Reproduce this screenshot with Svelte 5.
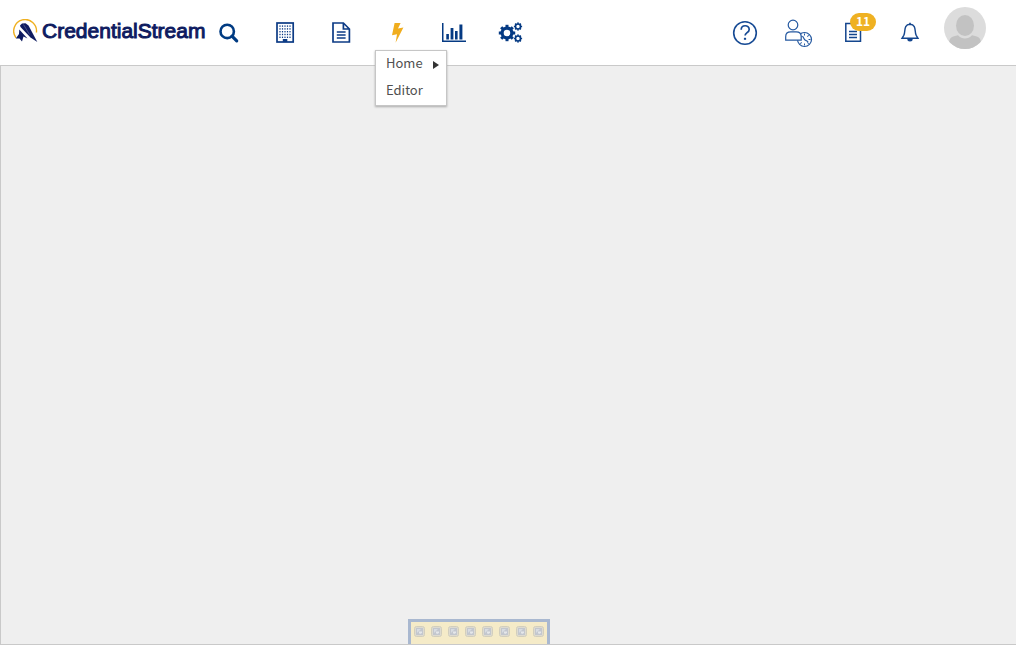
<script>
  const menu = [
    { label: 'Home', sub: true },
    { label: 'Editor', sub: false }
  ];
  const dots = [];
  for (let r = 0; r < 5; r++) for (let c = 0; c < 5; c++) dots.push([10.4 + c * 2.5, 8.4 + r * 2.8]);
  const slots = Array.from({ length: 8 }, (_, i) => i + 1);
  const teeth = [0, 45, 90, 135, 180, 225, 270, 315];
  const ticks = [0, 45, 90, 135, 180, 225, 270, 315];
  const gears = [
    { x: 14, y: 16, s: 1, r: 4.9, w: 3.2 },
    { x: 25, y: 9.5, s: 0.5, r: 5, w: 3.2 },
    { x: 25, y: 21.5, s: 0.5, r: 5, w: 3.2 }
  ];
</script>

<div class="page">
  <header>
    <a class="logo" href="#home" aria-label="CredentialStream">
      <svg width="25" height="25" viewBox="0 0 25 25">
        <path d="M3 18.800A11.400 11.400 0 1 1 23.400 13.500" fill="none" stroke="#efb021" stroke-width="1.4" />
        <path d="M7 6.500 9 4.500 12.500 4.200 15.500 6.500 24.300 23 17.500 18.500 7.500 8Z" fill="#0e1b60" />
        <path d="M6.300 10.500 14.500 19.500 10.500 17.500 9 22.500 6.500 19.500 2.800 19.500 6 15Z" fill="#0e1b60" />
        <path d="m10.500 5.500 6 10" stroke="#7d85aa" stroke-width=".5" />
      </svg>
      <span>CredentialStream</span>
    </a>
    <nav>
      <button aria-label="Search">
        <svg viewBox="0 0 32 32"><circle cx="14.2" cy="14.4" r="6.7" fill="none" stroke="#003b82" stroke-width="2.6" /><path d="m19 19.200 4.700 4.700" stroke="#003b82" stroke-width="3.2" stroke-linecap="round" /></svg>
      </button>
      <button aria-label="Facilities">
        <svg viewBox="0 0 32 32">
          <rect x="8" y="6" width="16.200" height="19" fill="none" stroke="#0c3b85" stroke-width="1.7" />
          {#each dots as [x, y]}<rect x={x} y={y} width="1.2" height="1.4" fill="#0c3b85" />{/each}
          <path d="M13.800 25v-3h4.500v3" fill="#0c3b85" />
        </svg>
      </button>
      <button aria-label="Documents">
        <svg viewBox="0 0 32 32" fill="none" stroke="#0c3b85" stroke-width="1.7"><path d="M8 6h10.400l6 6V25H8ZM18.400 6v6h6" /><path d="M11.800 15h8.800M11.800 18h8.800M11.800 21h8.800" stroke-width="1.5" /></svg>
      </button>
      <div class="drop">
        <button aria-label="Actions" aria-expanded="true">
          <svg viewBox="0 0 32 32"><path d="M13.600 6h6l-2.600 5.500 5.400-.9L14.600 25.700l1.400-8.500-5 1Z" fill="#f0ad1e" /></svg>
        </button>
        <ul>
          {#each menu as item}
            <li><a href="#{item.label}">{item.label}{#if item.sub}<svg class="arrow" viewBox="0 0 6 8"><path d="M0 0v8l6-4Z" fill="#333" /></svg>{/if}</a></li>
          {/each}
        </ul>
      </div>
      <button aria-label="Reports">
        <svg viewBox="0 0 32 32" fill="#053a83"><path d="M5 6h1.500v17.500H29V25H5Z" /><path d="M9.300 17h2.600v5.500H9.300ZM13.600 11h2.800v11.500h-2.800ZM18 14h2.600v8.500H18ZM22.400 7.500h3v15h-3Z" /></svg>
      </button>
      <button aria-label="Settings">
        <svg viewBox="0 0 32 32">
          {#each gears as g}
            <g transform="translate({g.x} {g.y}) scale({g.s})">
              <circle r={g.r} fill="none" stroke="#053a83" stroke-width={g.w} />
              {#each teeth as a}<rect x="-1.5" y="-8.200" width="3" height="3" fill="#053a83" transform="rotate({a})" />{/each}
            </g>
          {/each}
        </svg>
      </button>
    </nav>
    <div class="tools">
      <button aria-label="Help">
        <svg viewBox="0 0 32 32" fill="none" stroke="#164a94"><circle cx="16" cy="16" r="11.3" stroke-width="1.6" /><path d="M12.200 12.800c0-5.400 8-5.200 8-.4 0 3.200-4.100 3.300-4.100 6.200" stroke-width="1.7" /><path d="M16 20.800v2" stroke-width="2.200" /></svg>
      </button>
      <button aria-label="Pending users">
        <svg viewBox="0 0 32 32" fill="none" stroke="#2458a0">
          <circle cx="8" cy="8" r="4.8" stroke-width="1.2" />
          <circle cx="19.500" cy="22.500" r="7" stroke-width="1.2" />
          {#each ticks as a}<path d="M19.500 16.500v2" transform="rotate({a} 19.500 22.500)" stroke-width="1" />{/each}
          <path d="M.7 23.200v-3.500q0-4.800 5-4.800h5.500q5 0 5 4.800v3.500Z" stroke-width="1.2" fill="#fff" />
          <path d="m17.500 19 2.200 3.700 3.500 2" stroke-width="1.2" />
        </svg>
      </button>
      <button class="tasks" aria-label="Tasks, 11 open">
        <svg viewBox="0 0 32 32" fill="none" stroke="#14468e"><path d="M4.800 6.500h14.700v17.800H4.800Z" stroke-width="1.5" /><path d="M8 14.500h8M8 17.500h8M8 20.500h8" stroke-width="1.3" /></svg>
        <span class="badge">11</span>
      </button>
      <button aria-label="Notifications">
        <svg viewBox="0 0 32 32" fill="none" stroke="#14468e"><path d="M13 7.200c-7 .5-4.200 7.800-6.200 11.200L5 21.300h16l-1.800-2.900C17.200 15 20 7.700 13 7.200Z" stroke-width="1.4" /><path d="M13 5.700v1.600" stroke-width="1.6" /><path d="M10.300 22h5.400a2.700 2.500 0 0 1-5.400 0Z" fill="#14468e" stroke="none" /></svg>
      </button>
    </div>
    <button class="avatar" aria-label="Account">
      <svg viewBox="0 0 42 42">
        <defs><clipPath id="round"><circle cx="21" cy="21" r="21" /></clipPath></defs>
        <circle cx="21" cy="21" r="21" fill="#dcdcdc" />
        <g clip-path="url(#round)" fill="#c2c2c2"><ellipse cx="21" cy="18.500" rx="9" ry="10.500" /><path d="M5 37c0-7 3-7.500 9-8.800 4 4.400 10 4.400 14 0 6 1.300 9 1.800 9 8.800v6H5Z" /></g>
      </svg>
    </button>
  </header>
  <main>
    <div class="tray">
      {#each slots as n}
        <button class="slot" aria-label="Tool {n}">
          <svg viewBox="0 0 11 11"><rect x=".5" y=".5" width="10" height="10" rx="2" fill="#dedbd0" stroke="#d2cebd" /><rect x="2" y="2" width="7" height="7" fill="#c3c7ce" /><path d="M3 3h4L3 7Z" fill="#d8dce1" /><path d="m5 6 1-1 1 1 1-1v2L6 8 5 7Z" fill="#e5e7ea" /></svg>
        </button>
      {/each}
    </div>
  </main>
</div>

<style>
  :global(body) { margin: 0; }
  .page { min-height: 100vh; display: flex; flex-direction: column; background: #efefef; font-family: "Noto Sans CJK SC", "Open Sans", sans-serif; }
  header { display: flex; align-items: flex-start; box-sizing: border-box; height: 66px; padding: 0 30px 0 13px; background: #fff; border-bottom: 1px solid #c9c9c9; }
  button { display: block; padding: 0; border: 0; background: none; cursor: pointer; flex: none; }
  svg { display: block; }
  .logo { display: flex; align-items: center; gap: 4px; width: 200px; margin-top: 18px; height: 26px; flex: none; color: #0e1b60; text-decoration: none; font: 21px/26px "Liberation Sans", Arial, sans-serif; -webkit-text-stroke: 1px #0e1b60; }
  .logo svg { flex: none; }
  nav, .tools { display: flex; gap: 24px; padding-top: 17px; }
  nav svg, .tools svg { width: 32px; height: 32px; }
  .tools { margin-left: auto; }
  .drop, .tasks { position: relative; }
  ul { position: absolute; z-index: 2; top: 33px; left: -6px; box-sizing: border-box; width: 72px; margin: 0; padding: 0; list-style: none; background: #fff; border: 1px solid #c6c6c6; box-shadow: 0 1px 2px #aaa; }
  li a { display: flex; align-items: center; justify-content: space-between; padding: 0 7px 4px 10px; color: #505050; font: 13px/23px "Noto Sans CJK SC", sans-serif; text-decoration: none; }
  .drop .arrow { width: 6px; height: 8px; margin-top: 4px; }
  .badge { position: absolute; top: -4px; left: 9px; width: 26px; height: 18px; border-radius: 9px; background: #efb122; color: #fff; font: bold 12px/16px "Noto Sans CJK SC", sans-serif; text-align: center; }
  .avatar { margin: 7px 0 0 15px; }
  .avatar svg { width: 42px; height: 42px; }
  main { flex: 1; display: flex; align-items: flex-end; border-left: 1px solid #c9c9c9; border-bottom: 1px solid #c9c9c9; }
  .tray { display: flex; gap: 6px; margin-left: 407px; padding: 4px 3px 7px; background: #f5ebc8; border: 3px solid #a9b8d0; border-bottom: 0; }
  .slot svg { width: 11px; height: 11px; }
</style>
